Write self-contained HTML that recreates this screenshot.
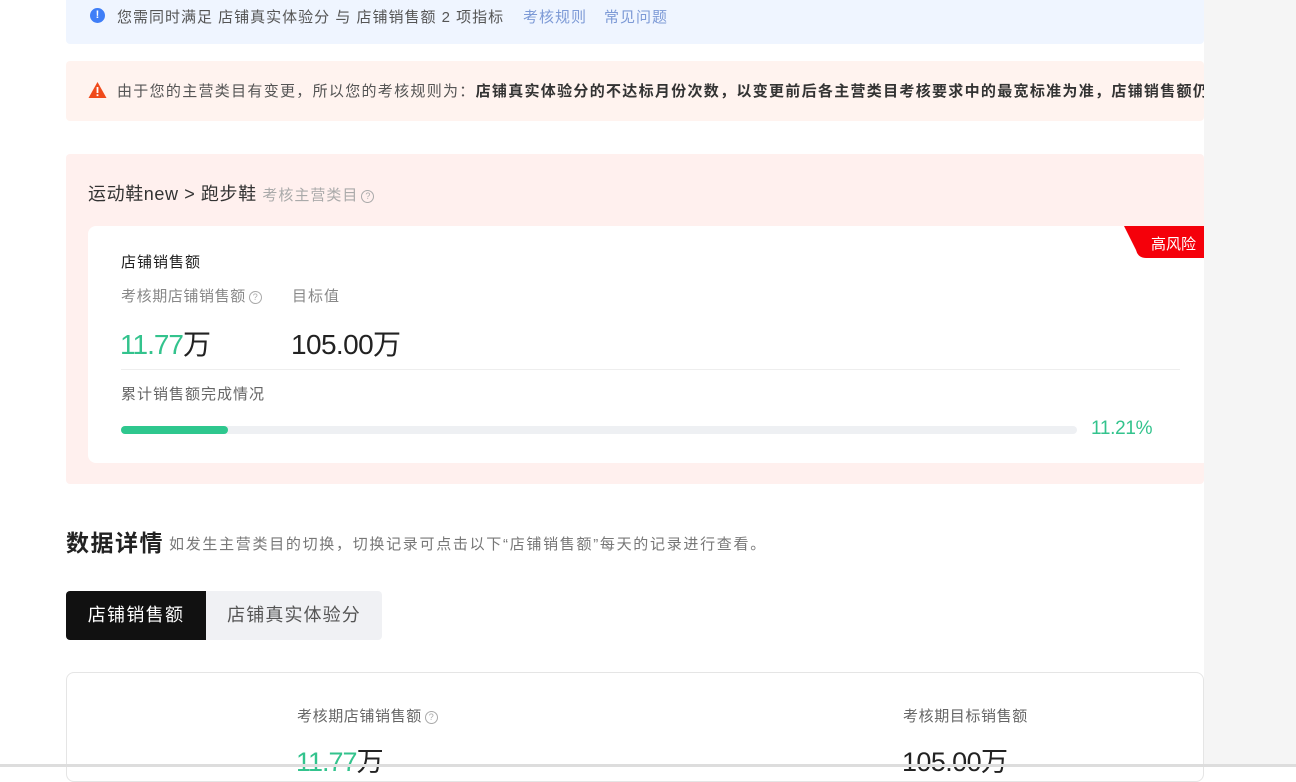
<!DOCTYPE html>
<html><head><meta charset="utf-8"><style>
*{margin:0;padding:0;box-sizing:border-box}
body{width:1296px;height:767px;overflow:hidden;background:#fff;font-family:"Liberation Sans","Noto Sans CJK SC",sans-serif;position:relative;color:#333}
.a{position:absolute;white-space:nowrap}
.s{font-size:15px;letter-spacing:1px}
.side{position:absolute;left:1204px;top:0;width:92px;height:767px;background:#f5f5f5}
.q{display:inline-block;width:13px;height:13px;border:1px solid #aaa;border-radius:50%;font-size:9px;line-height:11px;text-align:center;color:#aaa;vertical-align:1px;margin-left:3px;letter-spacing:0}
</style></head><body>
<div class="a" style="left:66px;top:-10px;width:1138px;height:54px;background:#eff5ff;border-radius:4px"></div>
<div class="a" style="left:90px;top:8px;width:15px;height:15px;border-radius:50%;background:#3f7ef7;color:#fff;font-size:11px;font-weight:bold;text-align:center;line-height:15px">!</div>
<div class="a s" style="left:117px;top:6px;color:#555">您需同时满足 店铺真实体验分 与 店铺销售额 2 项指标</div>
<div class="a s" style="left:523px;top:6px;color:#7d9ad6">考核规则</div>
<div class="a s" style="left:604px;top:6px;color:#7d9ad6">常见问题</div>
<div class="a" style="left:66px;top:61px;width:1138px;height:60px;background:#fff3ef;border-radius:4px;overflow:hidden">
<div class="a s" style="left:51px;top:19px;color:#555;letter-spacing:1.3px">由于您的主营类目有变更，所以您的考核规则为：<b style="color:#333">店铺真实体验分的不达标月份次数，以变更前后各主营类目考核要求中的最宽标准为准，店铺销售额仍</b></div>
</div>
<svg class="a" style="left:88px;top:81px" width="19" height="18" viewBox="0 0 19 18"><path d="M9.5 1L18.5 17H0.5Z" fill="#f04a1b"/><rect x="8.6" y="6" width="1.8" height="6" fill="#fff"/><rect x="8.6" y="13.3" width="1.8" height="1.8" fill="#fff"/></svg>
<div class="a" style="left:66px;top:154px;width:1138px;height:330px;background:#fff0ee;border-radius:4px"></div>
<div class="a" style="left:88px;top:180px;font-size:18px;color:#333;letter-spacing:0.6px">运动鞋new &gt; 跑步鞋 <span class="s" style="color:#aaa">考核主营类目<span class="q">?</span></span></div>
<div class="a" style="left:88px;top:226px;width:1116px;height:237px;background:#fff;border-radius:8px 0 0 8px"></div>
<svg class="a" style="left:1124px;top:226px" width="80" height="32"><path d="M0 0H80V32H22Q14 32 12 24Z" fill="#f5000a"/></svg>
<div class="a" style="left:1151px;top:233px;font-size:15px;color:#fff">高风险</div>
<div class="a s" style="left:121px;top:251px;color:#222">店铺销售额</div>
<div class="a s" style="left:121px;top:285px;color:#888;letter-spacing:0.6px">考核期店铺销售额<span class="q">?</span></div>
<div class="a s" style="left:292px;top:285px;color:#888">目标值</div>
<div class="a" style="left:120px;top:323px;font-size:28px;color:#222;letter-spacing:-1px"><span style="color:#33c38d">11.77</span>万</div>
<div class="a" style="left:291px;top:323px;font-size:28px;color:#222;letter-spacing:-0.6px">105.00万</div>
<div class="a" style="left:121px;top:369px;width:1059px;height:1px;background:#eee"></div>
<div class="a s" style="left:121px;top:383px;color:#666">累计销售额完成情况</div>
<div class="a" style="left:121px;top:426px;width:956px;height:8px;background:#eef0f3;border-radius:4px"></div>
<div class="a" style="left:121px;top:426px;width:107px;height:8px;background:#2ec78e;border-radius:4px"></div>
<div class="a" style="left:1091px;top:418px;font-size:19px;color:#33c38d;letter-spacing:-0.3px">11.21%</div>
<div class="a" style="left:66px;top:524px;font-size:23px;font-weight:bold;color:#222;letter-spacing:1.5px">数据详情</div>
<div class="a s" style="left:169px;top:533px;color:#777;letter-spacing:1.7px">如发生主营类目的切换，切换记录可点击以下“店铺销售额”每天的记录进行查看。</div>
<div class="a" style="left:66px;top:591px;width:140px;height:49px;background:#111;color:#fff;font-size:18px;letter-spacing:1.3px;line-height:49px;text-align:center;border-radius:4px 0 0 4px">店铺销售额</div>
<div class="a" style="left:206px;top:591px;width:176px;height:49px;background:#f0f1f4;color:#555;font-size:18px;letter-spacing:1.1px;line-height:49px;text-align:center;border-radius:0 4px 4px 0">店铺真实体验分</div>
<div class="a" style="left:66px;top:672px;width:1138px;height:110px;border:1px solid #e5e5e5;border-radius:8px"></div>
<div class="a s" style="left:297px;top:705px;color:#666;letter-spacing:0.6px">考核期店铺销售额<span class="q">?</span></div>
<div class="a s" style="left:903px;top:705px;color:#666;letter-spacing:0.6px">考核期目标销售额</div>
<div class="a" style="left:296px;top:740px;font-size:27px;color:#222;letter-spacing:-1px"><span style="color:#33c38d">11.77</span>万</div>
<div class="a" style="left:902px;top:740px;font-size:27px;color:#222;letter-spacing:-0.6px">105.00万</div>
<div class="side"></div>
<div class="a" style="left:0;top:764px;width:1296px;height:3px;background:#ddd"></div>
</body></html>
